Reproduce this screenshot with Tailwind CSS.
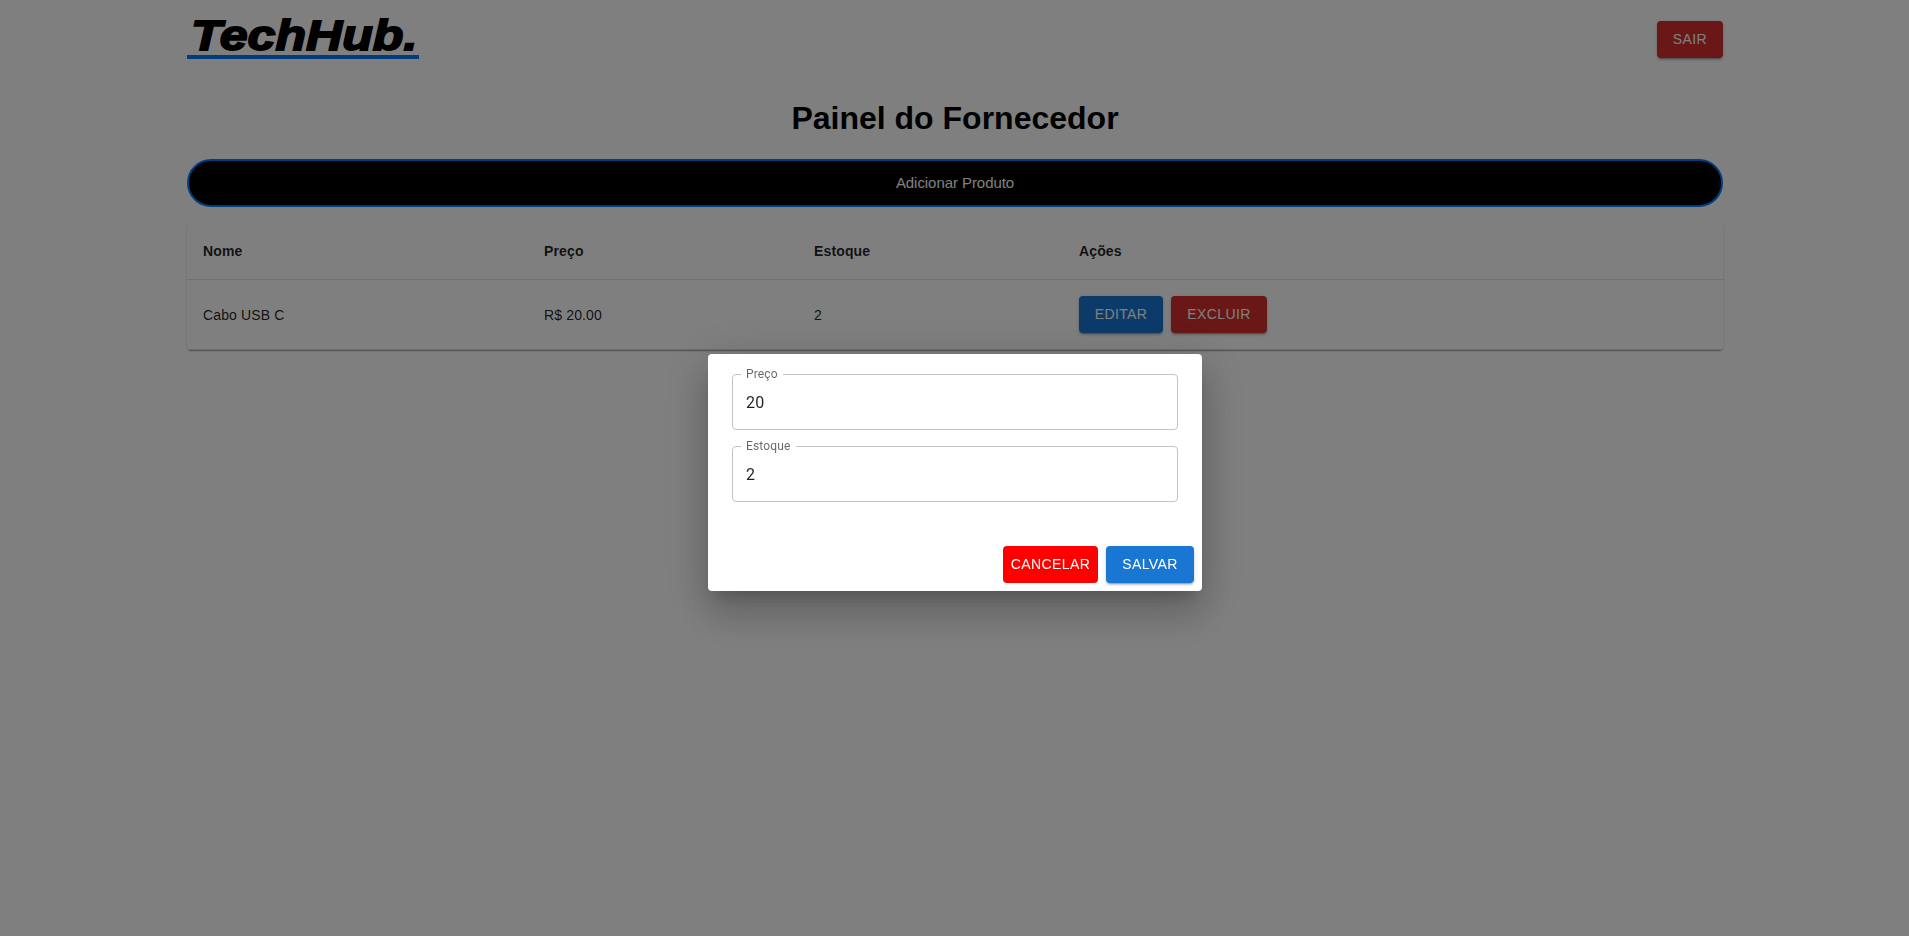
<!DOCTYPE html>
<html lang="pt-BR">
<head>
<meta charset="utf-8">
<title>TechHub - Painel do Fornecedor</title>
<script src="https://cdn.jsdelivr.net/npm/@tailwindcss/browser@4"></script>
</head>
<body class="bg-white font-['Liberation_Sans',Arial,sans-serif] text-black h-[936px] overflow-hidden">
<main class="ml-[187px] w-[1536px]">
  <header class="flex justify-between items-start h-[95px]">
    <div class="mt-[7px] h-[52px] w-[232px] border-b-4 border-[#007bff] pl-[4px] whitespace-nowrap">
      <span class="block origin-left scale-x-[1.165] pt-px font-bold italic text-[43px] leading-[54px] [-webkit-text-stroke:1.8px_#000]">TechHub.</span>
    </div>
    <button class="mt-[21px] w-[66px] rounded bg-[#d32f2f] py-1.5 text-sm leading-[25px] tracking-[0.4px] text-white shadow-[0_3px_1px_-2px_rgba(0,0,0,.2),0_2px_2px_0_rgba(0,0,0,.14),0_1px_5px_0_rgba(0,0,0,.12)]">SAIR</button>
  </header>
  <h1 class="text-center text-[32px] font-bold leading-[46px] h-16">Painel do Fornecedor</h1>
  <button class="block w-full h-12 rounded-full border-2 border-[#007bff] bg-black text-[15px] tracking-[-0.06px] text-white">Adicionar Produto</button>
  <div class="mt-4 rounded bg-white shadow-[0_2px_1px_-1px_rgba(0,0,0,.2),0_1px_1px_0_rgba(0,0,0,.14),0_1px_3px_0_rgba(0,0,0,.12)]">
    <table class="w-full table-fixed border-separate border-spacing-0 text-left text-sm tracking-[0.14px] text-black/87">
      <colgroup><col class="w-[341px]"><col class="w-[270px]"><col class="w-[265px]"><col></colgroup>
      <thead>
        <tr class="h-[57px] *:border-b *:border-[#e0e0e0] *:px-4 *:font-bold">
          <th>Nome</th><th>Preço</th><th>Estoque</th><th>Ações</th>
        </tr>
      </thead>
      <tbody>
        <tr class="h-[70px] *:border-b *:border-[#e0e0e0] *:px-4">
          <td>Cabo USB C</td><td>R$ 20.00</td><td>2</td>
          <td>
            <div class="flex gap-2">
              <button class="w-[84px] rounded bg-[#1976d2] py-1.5 text-sm leading-[25px] tracking-[0.4px] text-white shadow-[0_3px_1px_-2px_rgba(0,0,0,.2),0_2px_2px_0_rgba(0,0,0,.14),0_1px_5px_0_rgba(0,0,0,.12)]">EDITAR</button>
              <button class="w-[96px] rounded bg-[#d32f2f] py-1.5 text-sm leading-[25px] tracking-[0.4px] text-white shadow-[0_3px_1px_-2px_rgba(0,0,0,.2),0_2px_2px_0_rgba(0,0,0,.14),0_1px_5px_0_rgba(0,0,0,.12)]">EXCLUIR</button>
            </div>
          </td>
        </tr>
      </tbody>
    </table>
  </div>
</main>

<div class="fixed inset-0 bg-black/50 pl-[708px] pt-[354px]">
  <section class="flex w-[494px] h-[237px] flex-col rounded bg-white shadow-[0_11px_15px_-7px_rgba(0,0,0,.2),0_24px_38px_3px_rgba(0,0,0,.14),0_9px_46px_8px_rgba(0,0,0,.12)]">
    <div class="flex flex-col gap-4 px-6 pt-5 font-['Roboto',sans-serif]">
      <div class="relative flex h-14 items-center rounded border border-[#c4c4c4] px-[13px] pt-0.5 text-base tracking-[0.15px] text-black/87">
        <span class="absolute left-2 -top-[9px] bg-white pl-[5px] pr-[5px] text-xs leading-4 tracking-[0.13px] text-black/60">Preço</span>20
      </div>
      <div class="relative flex h-14 items-center rounded border border-[#c4c4c4] px-[13px] pt-0.5 text-base tracking-[0.15px] text-black/87">
        <span class="absolute left-2 -top-[9px] bg-white pl-[5px] pr-[6px] text-xs leading-4 tracking-[0.13px] text-black/60">Estoque</span>2
      </div>
    </div>
    <div class="mt-auto flex justify-end gap-2 p-2">
      <button class="w-[95px] rounded bg-[#ff0000] py-1.5 text-sm leading-[25px] tracking-[0.4px] text-white">CANCELAR</button>
      <button class="w-[88px] rounded bg-[#1976d2] py-1.5 text-sm leading-[25px] tracking-[0.4px] text-white shadow-[0_3px_1px_-2px_rgba(0,0,0,.2),0_2px_2px_0_rgba(0,0,0,.14),0_1px_5px_0_rgba(0,0,0,.12)]">SALVAR</button>
    </div>
  </section>
</div>
</body>
</html>
